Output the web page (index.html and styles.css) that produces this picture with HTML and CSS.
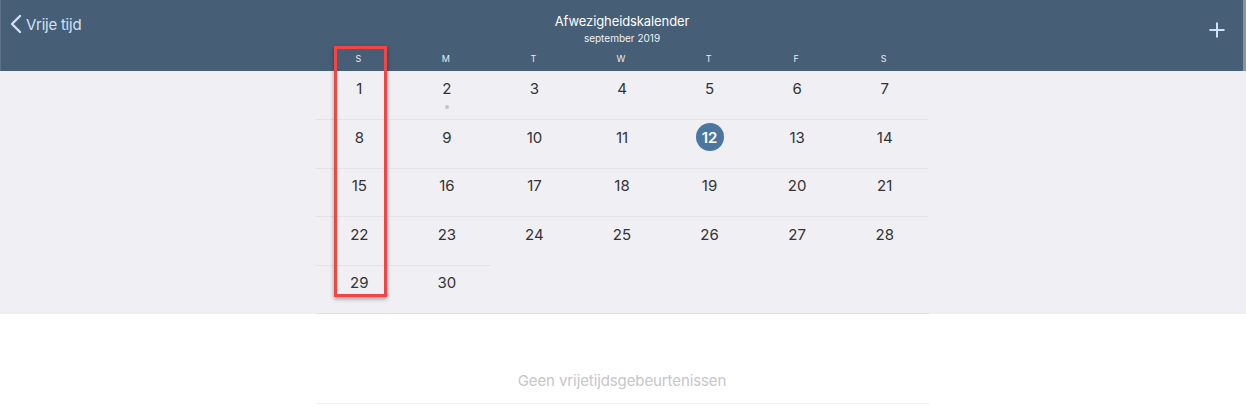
FILE: index.html
```html
<!DOCTYPE html>
<html lang="nl">
<head>
<meta charset="utf-8">
<title>Afwezigheidskalender</title>
<link rel="stylesheet" href="styles.css">
</head>
<body>
<div class="page">
  <header class="navbar">
    <div class="topbar">
      <a class="back">
        <svg class="chev" width="12" height="20" viewBox="0 0 12 20"><path d="M10 2 L2 10 L10 18" fill="none" stroke="currentColor" stroke-width="2.4" stroke-linecap="round" stroke-linejoin="round"/></svg>
        <span>Vrije tijd</span>
      </a>
      <div class="titles">
        <div class="title">Afwezigheidskalender</div>
        <div class="subtitle">september 2019</div>
      </div>
      <a class="add">
        <svg width="18" height="18" viewBox="0 0 18 18"><path d="M9 1.5 V16.5 M1.5 9 H16.5" stroke="currentColor" stroke-width="2" fill="none"/></svg>
      </a>
    </div>
    <div class="weekdays">
      <span>S</span><span>M</span><span>T</span><span>W</span><span>T</span><span>F</span><span>S</span>
    </div>
  </header>

  <section class="calendar">
    <div class="grid">
      <div class="cell"><span class="num">1</span></div>
      <div class="cell"><span class="num">2</span><span class="dot"></span></div>
      <div class="cell"><span class="num">3</span></div>
      <div class="cell"><span class="num">4</span></div>
      <div class="cell"><span class="num">5</span></div>
      <div class="cell"><span class="num">6</span></div>
      <div class="cell"><span class="num">7</span></div>

      <div class="cell sep"><span class="num">8</span></div>
      <div class="cell sep"><span class="num">9</span></div>
      <div class="cell sep"><span class="num">10</span></div>
      <div class="cell sep"><span class="num">11</span></div>
      <div class="cell sep"><span class="num today">12</span></div>
      <div class="cell sep"><span class="num">13</span></div>
      <div class="cell sep"><span class="num">14</span></div>

      <div class="cell sep"><span class="num">15</span></div>
      <div class="cell sep"><span class="num">16</span></div>
      <div class="cell sep"><span class="num">17</span></div>
      <div class="cell sep"><span class="num">18</span></div>
      <div class="cell sep"><span class="num">19</span></div>
      <div class="cell sep"><span class="num">20</span></div>
      <div class="cell sep"><span class="num">21</span></div>

      <div class="cell sep"><span class="num">22</span></div>
      <div class="cell sep"><span class="num">23</span></div>
      <div class="cell sep"><span class="num">24</span></div>
      <div class="cell sep"><span class="num">25</span></div>
      <div class="cell sep"><span class="num">26</span></div>
      <div class="cell sep"><span class="num">27</span></div>
      <div class="cell sep"><span class="num">28</span></div>

      <div class="cell sep"><span class="num">29</span></div>
      <div class="cell sep"><span class="num">30</span></div>
    </div>
  </section>

  <section class="events">
    <div class="empty">Geen vrijetijdsgebeurtenissen</div>
  </section>

  <div class="highlight"></div>
</div>
</body>
</html>
```

FILE: styles.css
```css
html, body {
  margin: 0;
  padding: 0;
  background: #ffffff;
}

body {
  font-family: Inter, "Liberation Sans", "Noto Sans", sans-serif;
  width: 1246px;
  height: 407px;
  overflow: hidden;
}

.page {
  position: relative;
  width: 1246px;
  height: 407px;
}

.navbar {
  background: #465e76;
  height: 71px;
  border-left: 1px solid #5d7288;
  border-right: 3px solid #8d9399;
  box-sizing: border-box;
}

.topbar {
  display: grid;
  grid-template-columns: 1fr auto 1fr;
  height: 48px;
}

.back {
  display: flex;
  align-items: center;
  gap: 4px;
  padding: 10px 0 0 9px;
  color: #cfe2f6;
  font-size: 15px;
  letter-spacing: -0.25px;
  align-self: start;
  height: 28px;
  box-sizing: content-box;
}

.chev {
  display: block;
}

.titles {
  text-align: center;
  color: #ffffff;
  padding-top: 13px;
}

.title {
  font-size: 13px;
  line-height: 16px;
  letter-spacing: -0.1px;
}

.subtitle {
  font-size: 10px;
  line-height: 12px;
  margin-top: 3px;
  color: #eef2f6;
}

.add {
  justify-self: end;
  color: #cfe2f6;
  padding: 21px 17px 0 0;
  display: block;
}

.add svg {
  display: block;
}

.weekdays {
  display: grid;
  grid-template-columns: repeat(7, 1fr);
  width: 613px;
  margin: 0 auto;
  padding-top: 5px;
  font-size: 9px;
  line-height: 12px;
  color: #e8edf2;
  text-align: center;
  position: relative;
  left: -1px;
}

.calendar {
  background: #efeff4;
  height: 243px;
}

.grid {
  width: 613px;
  margin: 0 auto;
  height: 243px;
  box-sizing: border-box;
  border-bottom: 1px solid #e2e2e7;
  display: grid;
  grid-template-columns: repeat(7, 1fr);
  grid-template-rows: repeat(5, 1fr);
  position: relative;
  left: -1px;
}

.cell {
  display: flex;
  flex-direction: column;
  align-items: center;
  padding-top: 3px;
  box-sizing: border-box;
}

.cell.sep {
  border-top: 1px solid #e2e2e7;
  padding-top: 3px;
}

.num {
  display: flex;
  align-items: center;
  justify-content: center;
  width: 28px;
  height: 28px;
  font-size: 15px;
  color: #333335;
}

.num.today {
  background: #4b76a0;
  color: #ffffff;
  border-radius: 50%;
  font-weight: 600;
}

.dot {
  width: 4px;
  height: 4px;
  border-radius: 50%;
  background: #c4c4c8;
  margin-top: 3px;
}

.events {
  width: 613px;
  margin: 0 auto;
  position: relative;
  left: -1px;
  height: 90px;
  border-bottom: 1px solid #f0f0f2;
  box-sizing: border-box;
  padding-top: 58px;
}

.empty {
  text-align: center;
  font-size: 15px;
  line-height: 18px;
  color: #c6c6cb;
  letter-spacing: -0.1px;
}

.highlight {
  position: absolute;
  left: 334px;
  top: 46px;
  width: 53px;
  height: 251px;
  box-sizing: border-box;
  border: 3px solid #f24646;
  box-shadow: 0 2px 4px rgba(0, 0, 0, 0.35);
}
```
